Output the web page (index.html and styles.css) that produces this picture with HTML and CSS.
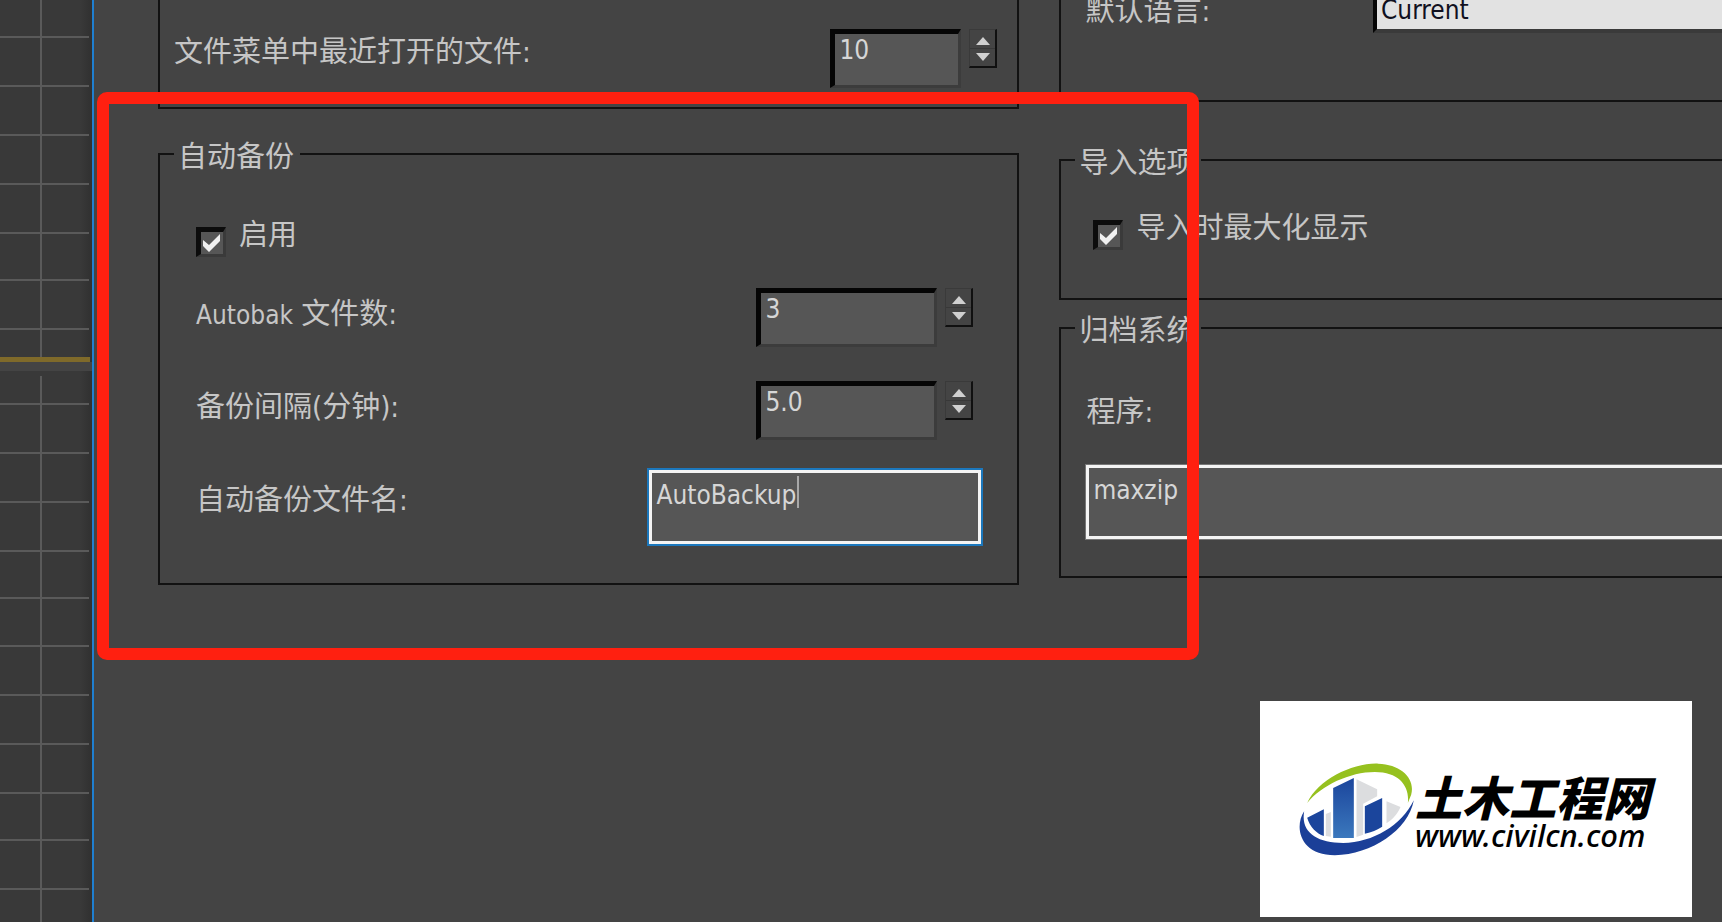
FILE: index.html
```html
<!DOCTYPE html>
<html lang="zh-CN">
<head>
    <meta charset="UTF-8">
    <meta name="viewport" content="width=device-width, initial-scale=1.0">
    <title>首选项设置</title>
    <link rel="stylesheet" href="styles.css">
</head>
<body>
    <svg class="viewport" width="92" height="922" viewBox="0 0 92 922" aria-hidden="true">
        <!-- top view -->
        <path class="grid-line" d="M0 37H89M0 86H89M0 135H89M0 184H89M0 233H89M0 280H89M0 329H89M41 0V357"/>
        <rect class="active-edge" x="0" y="357" width="90" height="5"/>
        <rect class="splitter" x="0" y="362" width="92" height="9"/>
        <!-- bottom view -->
        <path class="grid-line" d="M0 404H89M0 453H89M0 502H89M0 551H89M0 598H89M0 646H89M0 695H89M0 744H89M0 793H89M0 840H89M0 889H89M41 376V922"/>
    </svg>

    <form class="dialog">
        <div class="column">
            <div class="group group-open">
                <div class="row">
                    <label for="recent">文件菜单中最近打开的文件:</label>
                    <input class="number number-short" type="text" id="recent" value="10">
                    <div class="spinner">
                        <button type="button" aria-label="增加"><svg width="14" height="8" viewBox="0 0 14 8"><path d="M7 0L14 8H0Z"/></svg></button>
                        <button type="button" aria-label="减少"><svg width="14" height="8" viewBox="0 0 14 8"><path d="M0 0H14L7 8Z"/></svg></button>
                    </div>
                </div>
            </div>

            <fieldset class="group backup">
                <legend>自动备份</legend>
                <div class="group-body">
                    <div class="check">
                        <input type="checkbox" id="enable" checked>
                        <label for="enable">启用</label>
                    </div>
                    <div class="row">
                        <label for="files"><span class="latin">Autobak</span> 文件数:</label>
                        <input class="number" type="text" id="files" value="3">
                        <div class="spinner">
                            <button type="button" aria-label="增加"><svg width="14" height="8" viewBox="0 0 14 8"><path d="M7 0L14 8H0Z"/></svg></button>
                            <button type="button" aria-label="减少"><svg width="14" height="8" viewBox="0 0 14 8"><path d="M0 0H14L7 8Z"/></svg></button>
                        </div>
                    </div>
                    <div class="row">
                        <label for="interval">备份间隔(分钟):</label>
                        <input class="number" type="text" id="interval" value="5.0">
                        <div class="spinner">
                            <button type="button" aria-label="增加"><svg width="14" height="8" viewBox="0 0 14 8"><path d="M7 0L14 8H0Z"/></svg></button>
                            <button type="button" aria-label="减少"><svg width="14" height="8" viewBox="0 0 14 8"><path d="M0 0H14L7 8Z"/></svg></button>
                        </div>
                    </div>
                    <div class="row row-text">
                        <label for="filename">自动备份文件名:</label>
                        <div class="active-field">
                            <input class="text" type="text" id="filename" value="AutoBackup">
                            <span class="caret"></span>
                        </div>
                    </div>
                </div>
            </fieldset>
        </div>

        <div class="column column-right">
            <div class="group group-open language">
                <div class="row">
                    <label for="language">默认语言:</label>
                    <select id="language">
                        <option>Current</option>
                    </select>
                </div>
            </div>

            <fieldset class="group import">
                <legend>导入选项</legend>
                <div class="group-body">
                    <div class="check">
                        <input type="checkbox" id="zoom" checked>
                        <label for="zoom">导入时最大化显示</label>
                    </div>
                </div>
            </fieldset>

            <fieldset class="group archive">
                <legend>归档系统</legend>
                <div class="group-body">
                    <label for="program">程序:</label>
                    <input class="text" type="text" id="program" value="maxzip">
                </div>
            </fieldset>
        </div>

        <div class="highlight"></div>
    </form>

    <div class="brand">
        <svg width="117" height="95" viewBox="145 210 350 285" aria-hidden="true">
            <defs>
                <linearGradient id="tower" x1="0" y1="0" x2="0" y2="1">
                    <stop offset="0" stop-color="#1b459c"/>
                    <stop offset="1" stop-color="#3b78bd"/>
                </linearGradient>
            </defs>
            <path fill="#96c11f" d="M172 333C205 262 310 212 385 215C455 217 497 260 484 308L474 333C480 285 450 240 375 240C300 240 215 280 172 333Z"/>
            <path fill="#1b3f98" d="M163 358C132 405 150 490 255 490C365 488 475 415 492 325C455 400 370 452 280 453C200 452 152 420 163 358Z"/>
            <path fill="#dcdddf" d="M320 262L382 292V313L340 335V428L320 435ZM410 328L452 345C442 368 428 382 410 394ZM228 366L243 360V434L228 432Z"/>
            <path fill="#1b459c" d="M172 377L222 352V432C200 424 180 405 172 377ZM345 343L397 318V404C382 414 365 421 345 425Z"/>
            <path fill="url(#tower)" d="M250 288L312 258V438H250Z"/>
        </svg>
        <div class="brand-text">
            <div class="brand-name">土木工程网</div>
            <div class="brand-url">www.civilcn.com</div>
        </div>
    </div>
</body>
</html>
```
FILE: styles.css
```css
* {
    box-sizing: border-box;
}
body {
    margin: 0;
    min-height: 100vh;
    display: flex;
    position: relative;
    overflow: hidden;
    background-color: #444444;
    color: #c6c6c6;
    font-family: "DejaVu Sans Condensed", "Noto Sans", "Noto Sans CJK SC", sans-serif;
    font-size: 29px;
}
input, select {
    font-family: inherit;
    font-size: 26px;
    color: #d6d6d6;
    background-color: #565656;
    border-radius: 0;
    outline: none;
}
.latin {
    font-size: 26px;
}

/* 3D viewport behind the dialog */
.viewport {
    flex: none;
    background: linear-gradient(to right, #393939 80px, #303030 92px);
}
.grid-line {
    fill: none;
    stroke: #5a5a5a;
    stroke-width: 2;
}
.active-edge {
    fill: #7f6a2a;
}
.splitter {
    fill: #444444;
}

/* dialog */
.dialog {
    flex: 1;
    min-width: 0;
    position: relative;
    display: grid;
    grid-template-columns: 13fr 10fr;
    column-gap: 40px;
    align-items: start;
    padding-left: 64px;
    border-left: 2px solid #1f7fd0;
}
.column-right {
    margin-top: -12px;
}
.group {
    min-width: 0;
    margin: 0;
    padding: 0 14px;
    border: 2px solid #121212;
}
.group-open {
    border-top: none;
    padding: 29px 12px 19px 14px;
}
.column-right .group {
    border-right: none;
    padding-right: 0;
}
legend {
    padding: 6px 6px 0 4px;
    line-height: 32px;
}
label {
    line-height: 52px;
    white-space: nowrap;
}
.group-open label {
    line-height: 46px;
}

.backup {
    margin-top: 26px;
}
.backup .group-body {
    padding: 36px 22px 39px;
}
.group.language {
    padding: 0 0 66px 24px;
}
.import {
    margin-top: 39px;
}
.import .group-body {
    padding: 23px 0 44px 18px;
}
.archive {
    margin-top: 9px;
}
.archive .group-body {
    display: flex;
    flex-direction: column;
    padding: 39px 0 37px 11px;
}
.archive .text {
    margin-top: 27px;
    border-right: none;
}

.row {
    display: flex;
    align-items: flex-start;
}
.row label {
    margin-right: auto;
}
.check {
    display: flex;
    align-items: flex-start;
    gap: 13px;
}
.check + .row {
    margin-top: 27px;
}
.row + .row {
    margin-top: 34px;
}
.row + .row-text {
    margin-top: 30px;
}
.row-text label {
    line-height: 60px;
}

/* fields */
.number {
    width: 181px;
    height: 59px;
    padding: 0 4px 20px;
    border-style: solid;
    border-width: 5px 3px 3px 5px;
    border-color: #050505 #3c3c3c #3c3c3c #050505;
}
.number-short {
    width: 131px;
}
.text {
    width: 100%;
    height: 74px;
    padding: 4px 3px 28px 4px;
    border: 3px solid #f4f4f4;
    box-shadow: 0 0 0 1px #777777;
}
.active-field {
    position: relative;
    width: 332px;
}
.active-field .text {
    box-shadow: 0 0 0 2px #1c78bd;
}
.caret {
    position: absolute;
    left: 148px;
    top: 6px;
    width: 2px;
    height: 32px;
    background-color: #a8a8a8;
}
select {
    appearance: none;
    width: 349px;
    height: 45px;
    padding: 0 4px 2px;
    color: #101020;
    background-color: #e2e2e2;
    border-style: solid;
    border-width: 5px 0 4px 4px;
    border-color: #050505 #3a3a3a #3a3a3a #050505;
}
input[type="checkbox"] {
    appearance: none;
    flex: none;
    width: 30px;
    height: 30px;
    margin: 18px 0 0;
    border-style: solid;
    border-width: 5px 3px 3px 5px;
    border-color: #0c0c0c #3a3a3a #3a3a3a #0c0c0c;
}
input[type="checkbox"]:checked {
    background-image: url("data:image/svg+xml,%3Csvg xmlns='http://www.w3.org/2000/svg' viewBox='0 0 22 22'%3E%3Cpath d='M2 8L8 13L19 2V9L8 20L2 14Z' fill='%23f0f0f0'/%3E%3C/svg%3E");
}
.spinner {
    display: flex;
    flex-direction: column;
    width: 28px;
    margin: 0 8px;
    border: 1px solid #3a3a3a;
    border-right: 2px solid #101010;
    border-bottom: 2px solid #101010;
}
.spinner button {
    display: flex;
    align-items: center;
    justify-content: center;
    height: 18px;
    padding: 3px 0 0;
    border: none;
    background: none;
}
.spinner button + button {
    padding: 0 0 2px;
    border-top: 1px solid #383838;
}
.spinner svg {
    fill: #d0d0d0;
}

/* red frame round the backup settings */
.highlight {
    position: absolute;
    left: 3px;
    top: 92px;
    width: 1102px;
    height: 568px;
    border: 12px solid #ff2010;
    border-radius: 10px;
    pointer-events: none;
}

/* site mark */
.brand {
    position: absolute;
    right: 30px;
    bottom: 5px;
    width: 432px;
    height: 216px;
    padding-left: 38px;
    display: flex;
    align-items: center;
    background-color: #ffffff;
    color: #000000;
    font-style: italic;
    white-space: nowrap;
}
.brand-text {
    padding-top: 5px;
}
.brand-name {
    font-family: "Noto Sans CJK SC", sans-serif;
    font-size: 47px;
    font-weight: 900;
    line-height: 47px;
}
.brand-url {
    font-family: "Noto Sans", sans-serif;
    font-size: 31px;
    font-weight: 500;
    line-height: 32px;
}
```
